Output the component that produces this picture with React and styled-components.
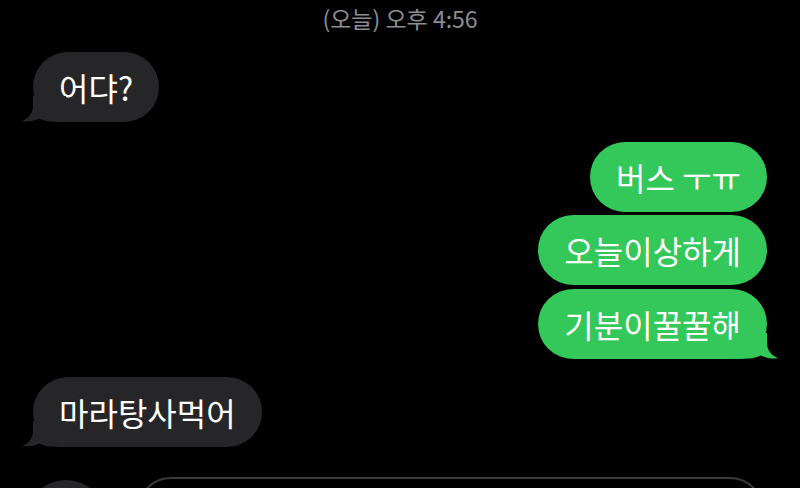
import React from 'react';
import styled, { createGlobalStyle } from 'styled-components';

const GlobalStyle = createGlobalStyle`
  html, body {
    margin: 0;
    padding: 0;
    height: 488px;
    overflow: hidden;
    background: #000;
  }

  body {
    font-family: "Noto Sans CJK KR", "Noto Sans", sans-serif;
    -webkit-font-smoothing: antialiased;
  }
`;

const messages = [
  { id: 1, from: 'them', text: '어댜?', tail: true },
  { id: 2, from: 'me', text: '버스 ㅜㅠ', gap: 20 },
  { id: 3, from: 'me', text: '오늘이상하게', gap: 3 },
  { id: 4, from: 'me', text: '기분이꿀꿀해', gap: 4, tail: true },
  { id: 5, from: 'them', text: '마라탕사먹어', gap: 18, tail: true },
];

// iMessage style tail, drawn for the left side and mirrored for the right
function Tail({ mine }) {
  return (
    <TailShape $mine={mine} width="44" height="26" viewBox="0 0 44 26">
      <path d="M11 0 L11 10 C11 17 7 22 0 25.5 C7 26 13 24.5 17 22.5 C22 25 28 26 44 26 L44 0 Z" />
    </TailShape>
  );
}

function App() {
  return (
    <>
      <GlobalStyle />
      <Screen>
        <Stamp>(오늘) 오후 4:56</Stamp>
        <Thread>
          {messages.map(m => (
            <Row key={m.id} $mine={m.from === 'me'} $gap={m.gap || 0}>
              <Bubble $mine={m.from === 'me'}>
                {m.text}
                {m.tail && <Tail mine={m.from === 'me'} />}
              </Bubble>
            </Row>
          ))}
        </Thread>
        <Composer>
          <PlusButton />
          <Field />
        </Composer>
      </Screen>
    </>
  );
}

export default App;

const Screen = styled.div`
  display: flex;
  flex-direction: column;
  width: 800px;
  height: 488px;
  overflow: hidden;
  background: #000;

  & > * {
    flex: none;
  }
`;

const Stamp = styled.div`
  height: 52px;
  padding-top: 5px;
  box-sizing: border-box;
  text-align: center;
  font-size: 23px;
  line-height: 26px;
  color: #8e8e93;
`;

const Thread = styled.div`
  display: flex;
  flex-direction: column;
  padding: 0 33px;
`;

const Row = styled.div`
  display: flex;
  justify-content: ${p => (p.$mine ? 'flex-end' : 'flex-start')};
  margin-top: ${p => p.$gap}px;
`;

const Bubble = styled.div`
  position: relative;
  display: flex;
  align-items: center;
  height: 70px;
  padding: 0 26px;
  box-sizing: border-box;
  border-radius: 35px;
  background: ${p => (p.$mine ? '#34c759' : '#262628')};
  color: #fff;
  font-size: 32px;
  line-height: 1;
  white-space: nowrap;
`;

const TailShape = styled.svg`
  position: absolute;
  bottom: 0;
  ${p => (p.$mine ? 'right: -11px; transform: scaleX(-1);' : 'left: -11px;')}
  fill: ${p => (p.$mine ? '#34c759' : '#262628')};
`;

const Composer = styled.div`
  display: flex;
  align-items: flex-start;
  gap: 31px;
  margin-top: 30px;
  padding: 0 36px 0 26px;
`;

const PlusButton = styled.div`
  flex: none;
  width: 80px;
  height: 80px;
  margin-top: 3px;
  border-radius: 50%;
  background: #262628;
`;

const Field = styled.div`
  flex: 1;
  height: 68px;
  border: 2px solid #3a3a3c;
  border-radius: 34px;
`;
